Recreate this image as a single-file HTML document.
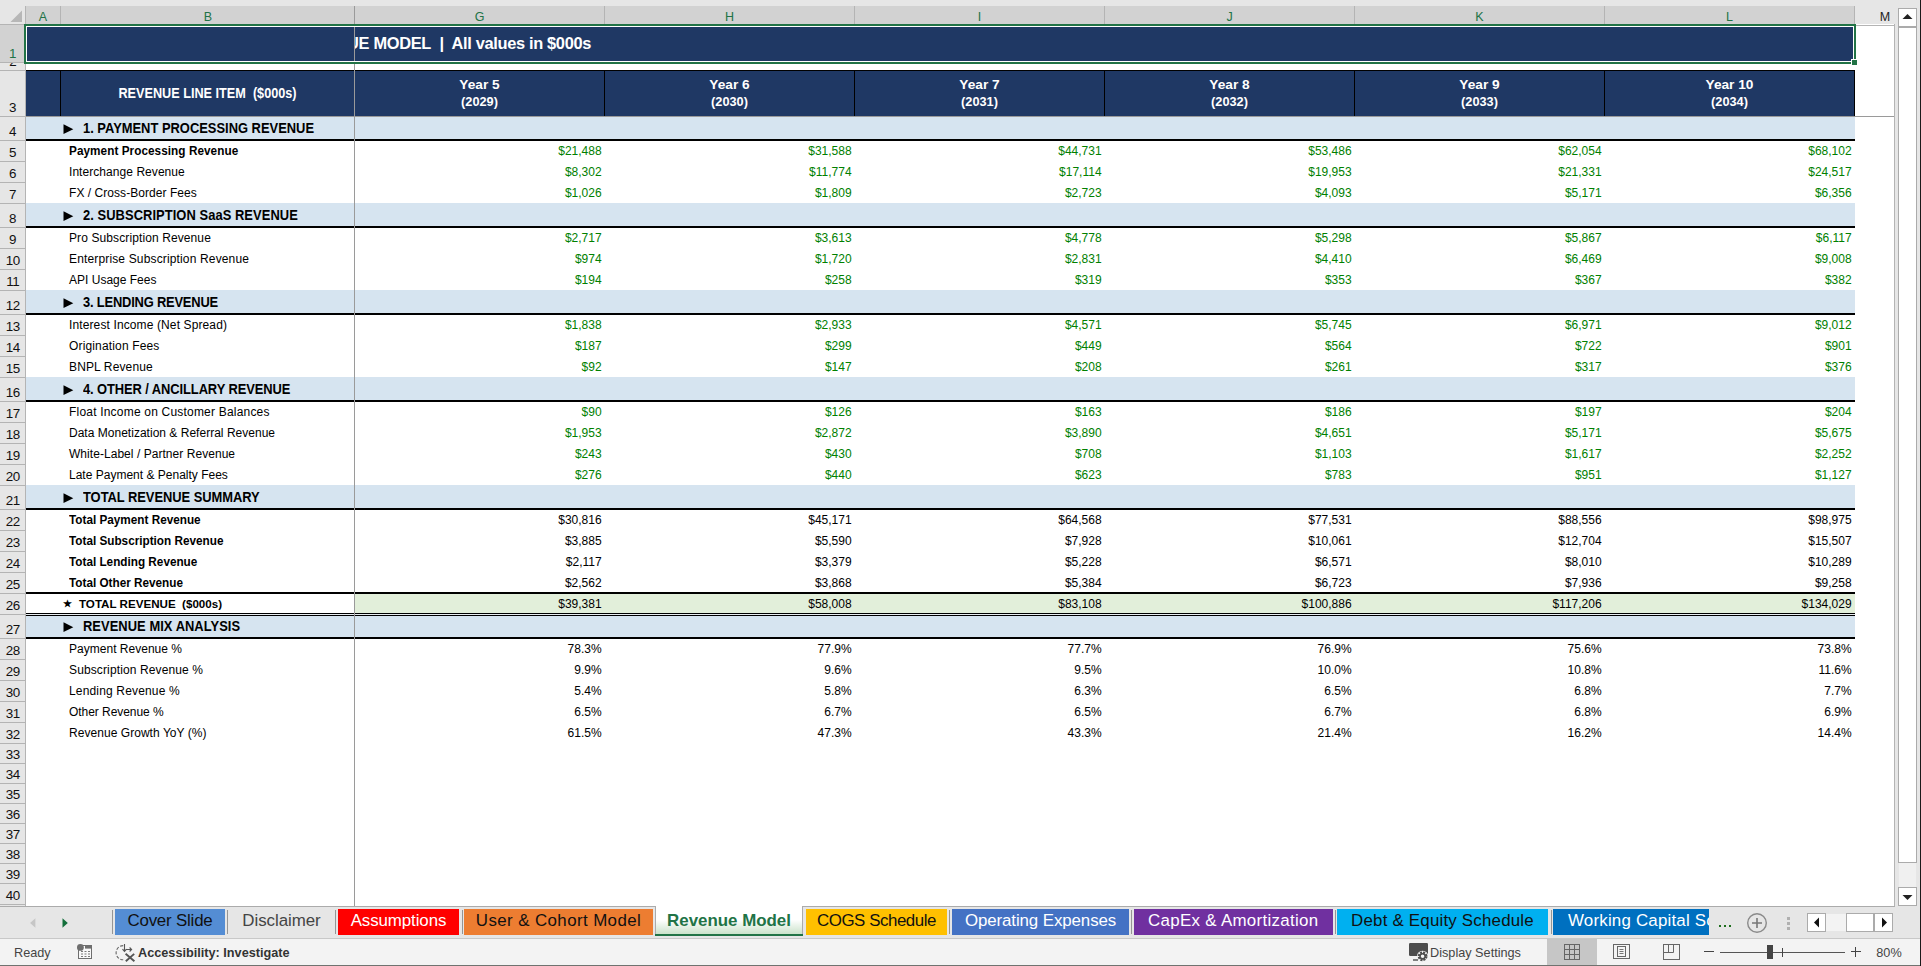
<!DOCTYPE html>
<html><head><meta charset="utf-8"><title>Revenue Model</title><style>
html,body{margin:0;padding:0;background:#e6e6e6;}
body{width:1921px;height:966px;position:relative;overflow:hidden;font-family:"Liberation Sans",sans-serif;}
body div,body svg{position:absolute;}
.t{white-space:nowrap;color:#000;font-size:12px;}
.ch{font-size:12.5px;text-align:center;color:#222;}
.ch.sel{color:#217346;}
.rh{font-size:13.4px;text-align:center;color:#111;letter-spacing:-0.5px;text-indent:0.6px;}
.rh.sel{color:#217346;}
.w{color:#fff;}
.seg{font-weight:bold;font-size:12.2px;}
.sec{font-size:14.2px;transform:scaleX(0.91);transform-origin:left center;}
.rli{font-size:14.2px;transform:scaleX(0.893);transform-origin:center center;}
.yr1{font-size:13.7px;}
.yr2{font-size:13.7px;transform:scaleX(0.93);transform-origin:center center;}
.tot{font-size:11.6px;}
.lb{font-size:12px;}
.b{font-weight:bold;font-size:12.3px;transform:scaleX(0.955);transform-origin:left center;}
.num{text-align:right;font-size:12px;}
.g{color:#008000;}
.k{color:#000;}
.title{font-weight:bold;font-size:16.4px;color:#fff;letter-spacing:-0.33px;}
.tab{font-size:16.9px;}
.st{font-size:12.7px;color:#444;}
</style></head><body>
<div style="left:0px;top:0px;width:1921px;height:966px;background:#e6e6e6;"></div>
<div style="left:26px;top:24px;width:1869px;height:882px;background:#fff;"></div>
<div style="left:26px;top:6px;width:1829px;height:18px;background:#d2d2d2;"></div>
<div style="left:60px;top:6px;width:1px;height:18px;background:#b4b4b4;"></div>
<div style="left:354px;top:6px;width:1px;height:18px;background:#9a9a9a;"></div>
<div style="left:604px;top:6px;width:1px;height:18px;background:#b4b4b4;"></div>
<div style="left:854px;top:6px;width:1px;height:18px;background:#b4b4b4;"></div>
<div style="left:1104px;top:6px;width:1px;height:18px;background:#b4b4b4;"></div>
<div style="left:1354px;top:6px;width:1px;height:18px;background:#b4b4b4;"></div>
<div style="left:1604px;top:6px;width:1px;height:18px;background:#b4b4b4;"></div>
<div style="left:1854px;top:6px;width:1px;height:18px;background:#b4b4b4;"></div>
<div class="t ch sel" style="left:23px;top:9px;width:40px;height:17px;line-height:17px;">A</div>
<div class="t ch sel" style="left:188px;top:9px;width:40px;height:17px;line-height:17px;">B</div>
<div class="t ch sel" style="left:459.5px;top:9px;width:40px;height:17px;line-height:17px;">G</div>
<div class="t ch sel" style="left:709.5px;top:9px;width:40px;height:17px;line-height:17px;">H</div>
<div class="t ch sel" style="left:959.5px;top:9px;width:40px;height:17px;line-height:17px;">I</div>
<div class="t ch sel" style="left:1209.5px;top:9px;width:40px;height:17px;line-height:17px;">J</div>
<div class="t ch sel" style="left:1459.5px;top:9px;width:40px;height:17px;line-height:17px;">K</div>
<div class="t ch sel" style="left:1709.5px;top:9px;width:40px;height:17px;line-height:17px;">L</div>
<div class="t ch" style="left:1865px;top:9px;width:40px;height:17px;line-height:17px;">M</div>
<svg style="left:10px;top:9.5px" width="13" height="13" viewBox="0 0 13 13"><path d="M12 0.5 L12 12 L0.5 12 Z" fill="#b7b7b7"/></svg>
<div style="left:0px;top:25px;width:25px;height:38px;background:#d2d2d2;"></div>
<div style="left:0px;top:24px;width:25px;height:1px;background:#b4b4b4;"></div>
<div style="left:25px;top:6px;width:1px;height:18px;background:#b4b4b4;"></div>
<div style="left:25px;top:24px;width:1px;height:882px;background:#b4b4b4;"></div>
<div style="left:0px;top:62px;width:25px;height:1px;background:#b4b4b4;"></div>
<div style="left:0px;top:70px;width:25px;height:1px;background:#b4b4b4;"></div>
<div style="left:0px;top:116px;width:25px;height:1px;background:#b4b4b4;"></div>
<div style="left:0px;top:140px;width:25px;height:1px;background:#b4b4b4;"></div>
<div style="left:0px;top:161px;width:25px;height:1px;background:#b4b4b4;"></div>
<div style="left:0px;top:182px;width:25px;height:1px;background:#b4b4b4;"></div>
<div style="left:0px;top:203px;width:25px;height:1px;background:#b4b4b4;"></div>
<div style="left:0px;top:227px;width:25px;height:1px;background:#b4b4b4;"></div>
<div style="left:0px;top:248px;width:25px;height:1px;background:#b4b4b4;"></div>
<div style="left:0px;top:269px;width:25px;height:1px;background:#b4b4b4;"></div>
<div style="left:0px;top:290px;width:25px;height:1px;background:#b4b4b4;"></div>
<div style="left:0px;top:314px;width:25px;height:1px;background:#b4b4b4;"></div>
<div style="left:0px;top:335px;width:25px;height:1px;background:#b4b4b4;"></div>
<div style="left:0px;top:356px;width:25px;height:1px;background:#b4b4b4;"></div>
<div style="left:0px;top:377px;width:25px;height:1px;background:#b4b4b4;"></div>
<div style="left:0px;top:401px;width:25px;height:1px;background:#b4b4b4;"></div>
<div style="left:0px;top:422px;width:25px;height:1px;background:#b4b4b4;"></div>
<div style="left:0px;top:443px;width:25px;height:1px;background:#b4b4b4;"></div>
<div style="left:0px;top:464px;width:25px;height:1px;background:#b4b4b4;"></div>
<div style="left:0px;top:485px;width:25px;height:1px;background:#b4b4b4;"></div>
<div style="left:0px;top:509px;width:25px;height:1px;background:#b4b4b4;"></div>
<div style="left:0px;top:530px;width:25px;height:1px;background:#b4b4b4;"></div>
<div style="left:0px;top:551px;width:25px;height:1px;background:#b4b4b4;"></div>
<div style="left:0px;top:572px;width:25px;height:1px;background:#b4b4b4;"></div>
<div style="left:0px;top:593px;width:25px;height:1px;background:#b4b4b4;"></div>
<div style="left:0px;top:614px;width:25px;height:1px;background:#b4b4b4;"></div>
<div style="left:0px;top:638px;width:25px;height:1px;background:#b4b4b4;"></div>
<div style="left:0px;top:659px;width:25px;height:1px;background:#b4b4b4;"></div>
<div style="left:0px;top:680px;width:25px;height:1px;background:#b4b4b4;"></div>
<div style="left:0px;top:701px;width:25px;height:1px;background:#b4b4b4;"></div>
<div style="left:0px;top:722px;width:25px;height:1px;background:#b4b4b4;"></div>
<div style="left:0px;top:743px;width:25px;height:1px;background:#b4b4b4;"></div>
<div style="left:0px;top:763px;width:25px;height:1px;background:#b4b4b4;"></div>
<div style="left:0px;top:783px;width:25px;height:1px;background:#b4b4b4;"></div>
<div style="left:0px;top:803px;width:25px;height:1px;background:#b4b4b4;"></div>
<div style="left:0px;top:823px;width:25px;height:1px;background:#b4b4b4;"></div>
<div style="left:0px;top:843px;width:25px;height:1px;background:#b4b4b4;"></div>
<div style="left:0px;top:863px;width:25px;height:1px;background:#b4b4b4;"></div>
<div style="left:0px;top:883px;width:25px;height:1px;background:#b4b4b4;"></div>
<div style="left:0px;top:904px;width:25px;height:1px;background:#b4b4b4;"></div>
<div class="t rh sel" style="left:0px;top:46px;width:25px;height:16px;line-height:16px;text-indent:0px;">1</div>
<div class="t rh" style="left:0;top:63px;width:25px;height:6px;overflow:hidden;"><div class="t rh" style="left:0;top:-9px;width:25px;height:16px;line-height:16px">2</div></div>
<div class="t rh" style="left:0px;top:100px;width:25px;height:16px;line-height:16px;text-indent:0px;">3</div>
<div class="t rh" style="left:0px;top:124px;width:25px;height:16px;line-height:16px;text-indent:0px;">4</div>
<div class="t rh" style="left:0px;top:145px;width:25px;height:16px;line-height:16px;text-indent:0px;">5</div>
<div class="t rh" style="left:0px;top:166px;width:25px;height:16px;line-height:16px;text-indent:0px;">6</div>
<div class="t rh" style="left:0px;top:187px;width:25px;height:16px;line-height:16px;text-indent:0px;">7</div>
<div class="t rh" style="left:0px;top:211px;width:25px;height:16px;line-height:16px;text-indent:0px;">8</div>
<div class="t rh" style="left:0px;top:232px;width:25px;height:16px;line-height:16px;text-indent:0px;">9</div>
<div class="t rh" style="left:0px;top:253px;width:25px;height:16px;line-height:16px;">10</div>
<div class="t rh" style="left:0px;top:274px;width:25px;height:16px;line-height:16px;">11</div>
<div class="t rh" style="left:0px;top:298px;width:25px;height:16px;line-height:16px;">12</div>
<div class="t rh" style="left:0px;top:319px;width:25px;height:16px;line-height:16px;">13</div>
<div class="t rh" style="left:0px;top:340px;width:25px;height:16px;line-height:16px;">14</div>
<div class="t rh" style="left:0px;top:361px;width:25px;height:16px;line-height:16px;">15</div>
<div class="t rh" style="left:0px;top:385px;width:25px;height:16px;line-height:16px;">16</div>
<div class="t rh" style="left:0px;top:406px;width:25px;height:16px;line-height:16px;">17</div>
<div class="t rh" style="left:0px;top:427px;width:25px;height:16px;line-height:16px;">18</div>
<div class="t rh" style="left:0px;top:448px;width:25px;height:16px;line-height:16px;">19</div>
<div class="t rh" style="left:0px;top:469px;width:25px;height:16px;line-height:16px;">20</div>
<div class="t rh" style="left:0px;top:493px;width:25px;height:16px;line-height:16px;">21</div>
<div class="t rh" style="left:0px;top:514px;width:25px;height:16px;line-height:16px;">22</div>
<div class="t rh" style="left:0px;top:535px;width:25px;height:16px;line-height:16px;">23</div>
<div class="t rh" style="left:0px;top:556px;width:25px;height:16px;line-height:16px;">24</div>
<div class="t rh" style="left:0px;top:577px;width:25px;height:16px;line-height:16px;">25</div>
<div class="t rh" style="left:0px;top:598px;width:25px;height:16px;line-height:16px;">26</div>
<div class="t rh" style="left:0px;top:622px;width:25px;height:16px;line-height:16px;">27</div>
<div class="t rh" style="left:0px;top:643px;width:25px;height:16px;line-height:16px;">28</div>
<div class="t rh" style="left:0px;top:664px;width:25px;height:16px;line-height:16px;">29</div>
<div class="t rh" style="left:0px;top:685px;width:25px;height:16px;line-height:16px;">30</div>
<div class="t rh" style="left:0px;top:706px;width:25px;height:16px;line-height:16px;">31</div>
<div class="t rh" style="left:0px;top:727px;width:25px;height:16px;line-height:16px;">32</div>
<div class="t rh" style="left:0px;top:747px;width:25px;height:16px;line-height:16px;">33</div>
<div class="t rh" style="left:0px;top:767px;width:25px;height:16px;line-height:16px;">34</div>
<div class="t rh" style="left:0px;top:787px;width:25px;height:16px;line-height:16px;">35</div>
<div class="t rh" style="left:0px;top:807px;width:25px;height:16px;line-height:16px;">36</div>
<div class="t rh" style="left:0px;top:827px;width:25px;height:16px;line-height:16px;">37</div>
<div class="t rh" style="left:0px;top:847px;width:25px;height:16px;line-height:16px;">38</div>
<div class="t rh" style="left:0px;top:867px;width:25px;height:16px;line-height:16px;">39</div>
<div class="t rh" style="left:0px;top:888px;width:25px;height:16px;line-height:16px;">40</div>
<div style="left:27px;top:27px;width:1826px;height:34px;background:#1f3864;"></div>
<div style="left:26px;top:70px;width:1829px;height:46px;background:#1f3864;"></div>
<div style="left:26px;top:70px;width:1829px;height:1px;background:#000;"></div>
<div style="left:60px;top:70px;width:1px;height:46px;background:#000;"></div>
<div style="left:354px;top:70px;width:1px;height:46px;background:#000;"></div>
<div style="left:604px;top:70px;width:1px;height:46px;background:#000;"></div>
<div style="left:854px;top:70px;width:1px;height:46px;background:#000;"></div>
<div style="left:1104px;top:70px;width:1px;height:46px;background:#000;"></div>
<div style="left:1354px;top:70px;width:1px;height:46px;background:#000;"></div>
<div style="left:1604px;top:70px;width:1px;height:46px;background:#000;"></div>
<div style="left:1854px;top:70px;width:1px;height:46px;background:#000;"></div>
<div class="t seg w rli" style="left:61px;top:70px;width:293px;height:46px;line-height:46px;text-align:center;">REVENUE LINE ITEM&nbsp; ($000s)</div>
<div class="t seg w yr1" style="left:355px;top:76px;width:249px;height:18px;line-height:18px;text-align:center;">Year 5</div>
<div class="t seg w yr2" style="left:355px;top:93px;width:249px;height:18px;line-height:18px;text-align:center;">(2029)</div>
<div class="t seg w yr1" style="left:605px;top:76px;width:249px;height:18px;line-height:18px;text-align:center;">Year 6</div>
<div class="t seg w yr2" style="left:605px;top:93px;width:249px;height:18px;line-height:18px;text-align:center;">(2030)</div>
<div class="t seg w yr1" style="left:855px;top:76px;width:249px;height:18px;line-height:18px;text-align:center;">Year 7</div>
<div class="t seg w yr2" style="left:855px;top:93px;width:249px;height:18px;line-height:18px;text-align:center;">(2031)</div>
<div class="t seg w yr1" style="left:1105px;top:76px;width:249px;height:18px;line-height:18px;text-align:center;">Year 8</div>
<div class="t seg w yr2" style="left:1105px;top:93px;width:249px;height:18px;line-height:18px;text-align:center;">(2032)</div>
<div class="t seg w yr1" style="left:1355px;top:76px;width:249px;height:18px;line-height:18px;text-align:center;">Year 9</div>
<div class="t seg w yr2" style="left:1355px;top:93px;width:249px;height:18px;line-height:18px;text-align:center;">(2033)</div>
<div class="t seg w yr1" style="left:1605px;top:76px;width:249px;height:18px;line-height:18px;text-align:center;">Year 10</div>
<div class="t seg w yr2" style="left:1605px;top:93px;width:249px;height:18px;line-height:18px;text-align:center;">(2034)</div>
<div style="left:26px;top:116px;width:1829px;height:23px;background:#d6e4f0;"></div>
<div style="left:26px;top:139px;width:1829px;height:2px;background:#000;"></div>
<svg style="left:63px;top:124px" width="11" height="11" viewBox="0 0 11 11"><path d="M0.5 0.3 L10.3 5.2 L0.5 10 Z" fill="#000"/></svg>
<div class="t seg sec" style="left:83px;top:117px;width:270px;height:23px;line-height:23px;letter-spacing:0.0px;">1. PAYMENT PROCESSING REVENUE</div>
<div style="left:26px;top:203px;width:1829px;height:23px;background:#d6e4f0;"></div>
<div style="left:26px;top:226px;width:1829px;height:2px;background:#000;"></div>
<svg style="left:63px;top:211px" width="11" height="11" viewBox="0 0 11 11"><path d="M0.5 0.3 L10.3 5.2 L0.5 10 Z" fill="#000"/></svg>
<div class="t seg sec" style="left:83px;top:204px;width:270px;height:23px;line-height:23px;letter-spacing:0.069px;">2. SUBSCRIPTION SaaS REVENUE</div>
<div style="left:26px;top:290px;width:1829px;height:23px;background:#d6e4f0;"></div>
<div style="left:26px;top:313px;width:1829px;height:2px;background:#000;"></div>
<svg style="left:63px;top:298px" width="11" height="11" viewBox="0 0 11 11"><path d="M0.5 0.3 L10.3 5.2 L0.5 10 Z" fill="#000"/></svg>
<div class="t seg sec" style="left:83px;top:291px;width:270px;height:23px;line-height:23px;letter-spacing:-0.213px;">3. LENDING REVENUE</div>
<div style="left:26px;top:377px;width:1829px;height:23px;background:#d6e4f0;"></div>
<div style="left:26px;top:400px;width:1829px;height:2px;background:#000;"></div>
<svg style="left:63px;top:385px" width="11" height="11" viewBox="0 0 11 11"><path d="M0.5 0.3 L10.3 5.2 L0.5 10 Z" fill="#000"/></svg>
<div class="t seg sec" style="left:83px;top:378px;width:270px;height:23px;line-height:23px;letter-spacing:-0.098px;">4. OTHER / ANCILLARY REVENUE</div>
<div style="left:26px;top:485px;width:1829px;height:23px;background:#d6e4f0;"></div>
<div style="left:26px;top:508px;width:1829px;height:2px;background:#000;"></div>
<svg style="left:63px;top:493px" width="11" height="11" viewBox="0 0 11 11"><path d="M0.5 0.3 L10.3 5.2 L0.5 10 Z" fill="#000"/></svg>
<div class="t seg sec" style="left:83px;top:486px;width:270px;height:23px;line-height:23px;letter-spacing:-0.038px;">TOTAL REVENUE SUMMARY</div>
<div style="left:26px;top:616px;width:1829px;height:21px;background:#d6e4f0;"></div>
<div style="left:26px;top:637px;width:1829px;height:2px;background:#000;"></div>
<svg style="left:63px;top:622px" width="11" height="11" viewBox="0 0 11 11"><path d="M0.5 0.3 L10.3 5.2 L0.5 10 Z" fill="#000"/></svg>
<div class="t seg sec" style="left:83px;top:615px;width:270px;height:23px;line-height:23px;letter-spacing:0.052px;">REVENUE MIX ANALYSIS</div>
<div class="t lb b" style="left:69px;top:141px;width:284px;height:21px;line-height:21px;letter-spacing:0.06px;">Payment Processing Revenue</div>
<div class="t num g" style="left:355px;top:141px;width:246.6px;height:21px;line-height:21px;">$21,488</div>
<div class="t num g" style="left:605px;top:141px;width:246.6px;height:21px;line-height:21px;">$31,588</div>
<div class="t num g" style="left:855px;top:141px;width:246.6px;height:21px;line-height:21px;">$44,731</div>
<div class="t num g" style="left:1105px;top:141px;width:246.6px;height:21px;line-height:21px;">$53,486</div>
<div class="t num g" style="left:1355px;top:141px;width:246.6px;height:21px;line-height:21px;">$62,054</div>
<div class="t num g" style="left:1605px;top:141px;width:246.6px;height:21px;line-height:21px;">$68,102</div>
<div class="t lb" style="left:69px;top:162px;width:284px;height:21px;line-height:21px;letter-spacing:0.056px;">Interchange Revenue</div>
<div class="t num g" style="left:355px;top:162px;width:246.6px;height:21px;line-height:21px;">$8,302</div>
<div class="t num g" style="left:605px;top:162px;width:246.6px;height:21px;line-height:21px;">$11,774</div>
<div class="t num g" style="left:855px;top:162px;width:246.6px;height:21px;line-height:21px;">$17,114</div>
<div class="t num g" style="left:1105px;top:162px;width:246.6px;height:21px;line-height:21px;">$19,953</div>
<div class="t num g" style="left:1355px;top:162px;width:246.6px;height:21px;line-height:21px;">$21,331</div>
<div class="t num g" style="left:1605px;top:162px;width:246.6px;height:21px;line-height:21px;">$24,517</div>
<div class="t lb" style="left:69px;top:183px;width:284px;height:21px;line-height:21px;letter-spacing:0.048px;">FX / Cross-Border Fees</div>
<div class="t num g" style="left:355px;top:183px;width:246.6px;height:21px;line-height:21px;">$1,026</div>
<div class="t num g" style="left:605px;top:183px;width:246.6px;height:21px;line-height:21px;">$1,809</div>
<div class="t num g" style="left:855px;top:183px;width:246.6px;height:21px;line-height:21px;">$2,723</div>
<div class="t num g" style="left:1105px;top:183px;width:246.6px;height:21px;line-height:21px;">$4,093</div>
<div class="t num g" style="left:1355px;top:183px;width:246.6px;height:21px;line-height:21px;">$5,171</div>
<div class="t num g" style="left:1605px;top:183px;width:246.6px;height:21px;line-height:21px;">$6,356</div>
<div class="t lb" style="left:69px;top:228px;width:284px;height:21px;line-height:21px;letter-spacing:0.104px;">Pro Subscription Revenue</div>
<div class="t num g" style="left:355px;top:228px;width:246.6px;height:21px;line-height:21px;">$2,717</div>
<div class="t num g" style="left:605px;top:228px;width:246.6px;height:21px;line-height:21px;">$3,613</div>
<div class="t num g" style="left:855px;top:228px;width:246.6px;height:21px;line-height:21px;">$4,778</div>
<div class="t num g" style="left:1105px;top:228px;width:246.6px;height:21px;line-height:21px;">$5,298</div>
<div class="t num g" style="left:1355px;top:228px;width:246.6px;height:21px;line-height:21px;">$5,867</div>
<div class="t num g" style="left:1605px;top:228px;width:246.6px;height:21px;line-height:21px;">$6,117</div>
<div class="t lb" style="left:69px;top:249px;width:284px;height:21px;line-height:21px;letter-spacing:0.15px;">Enterprise Subscription Revenue</div>
<div class="t num g" style="left:355px;top:249px;width:246.6px;height:21px;line-height:21px;">$974</div>
<div class="t num g" style="left:605px;top:249px;width:246.6px;height:21px;line-height:21px;">$1,720</div>
<div class="t num g" style="left:855px;top:249px;width:246.6px;height:21px;line-height:21px;">$2,831</div>
<div class="t num g" style="left:1105px;top:249px;width:246.6px;height:21px;line-height:21px;">$4,410</div>
<div class="t num g" style="left:1355px;top:249px;width:246.6px;height:21px;line-height:21px;">$6,469</div>
<div class="t num g" style="left:1605px;top:249px;width:246.6px;height:21px;line-height:21px;">$9,008</div>
<div class="t lb" style="left:69px;top:270px;width:284px;height:21px;line-height:21px;letter-spacing:0.008px;">API Usage Fees</div>
<div class="t num g" style="left:355px;top:270px;width:246.6px;height:21px;line-height:21px;">$194</div>
<div class="t num g" style="left:605px;top:270px;width:246.6px;height:21px;line-height:21px;">$258</div>
<div class="t num g" style="left:855px;top:270px;width:246.6px;height:21px;line-height:21px;">$319</div>
<div class="t num g" style="left:1105px;top:270px;width:246.6px;height:21px;line-height:21px;">$353</div>
<div class="t num g" style="left:1355px;top:270px;width:246.6px;height:21px;line-height:21px;">$367</div>
<div class="t num g" style="left:1605px;top:270px;width:246.6px;height:21px;line-height:21px;">$382</div>
<div class="t lb" style="left:69px;top:315px;width:284px;height:21px;line-height:21px;letter-spacing:0.119px;">Interest Income (Net Spread)</div>
<div class="t num g" style="left:355px;top:315px;width:246.6px;height:21px;line-height:21px;">$1,838</div>
<div class="t num g" style="left:605px;top:315px;width:246.6px;height:21px;line-height:21px;">$2,933</div>
<div class="t num g" style="left:855px;top:315px;width:246.6px;height:21px;line-height:21px;">$4,571</div>
<div class="t num g" style="left:1105px;top:315px;width:246.6px;height:21px;line-height:21px;">$5,745</div>
<div class="t num g" style="left:1355px;top:315px;width:246.6px;height:21px;line-height:21px;">$6,971</div>
<div class="t num g" style="left:1605px;top:315px;width:246.6px;height:21px;line-height:21px;">$9,012</div>
<div class="t lb" style="left:69px;top:336px;width:284px;height:21px;line-height:21px;letter-spacing:0.153px;">Origination Fees</div>
<div class="t num g" style="left:355px;top:336px;width:246.6px;height:21px;line-height:21px;">$187</div>
<div class="t num g" style="left:605px;top:336px;width:246.6px;height:21px;line-height:21px;">$299</div>
<div class="t num g" style="left:855px;top:336px;width:246.6px;height:21px;line-height:21px;">$449</div>
<div class="t num g" style="left:1105px;top:336px;width:246.6px;height:21px;line-height:21px;">$564</div>
<div class="t num g" style="left:1355px;top:336px;width:246.6px;height:21px;line-height:21px;">$722</div>
<div class="t num g" style="left:1605px;top:336px;width:246.6px;height:21px;line-height:21px;">$901</div>
<div class="t lb" style="left:69px;top:357px;width:284px;height:21px;line-height:21px;letter-spacing:0.127px;">BNPL Revenue</div>
<div class="t num g" style="left:355px;top:357px;width:246.6px;height:21px;line-height:21px;">$92</div>
<div class="t num g" style="left:605px;top:357px;width:246.6px;height:21px;line-height:21px;">$147</div>
<div class="t num g" style="left:855px;top:357px;width:246.6px;height:21px;line-height:21px;">$208</div>
<div class="t num g" style="left:1105px;top:357px;width:246.6px;height:21px;line-height:21px;">$261</div>
<div class="t num g" style="left:1355px;top:357px;width:246.6px;height:21px;line-height:21px;">$317</div>
<div class="t num g" style="left:1605px;top:357px;width:246.6px;height:21px;line-height:21px;">$376</div>
<div class="t lb" style="left:69px;top:402px;width:284px;height:21px;line-height:21px;letter-spacing:0.2px;">Float Income on Customer Balances</div>
<div class="t num g" style="left:355px;top:402px;width:246.6px;height:21px;line-height:21px;">$90</div>
<div class="t num g" style="left:605px;top:402px;width:246.6px;height:21px;line-height:21px;">$126</div>
<div class="t num g" style="left:855px;top:402px;width:246.6px;height:21px;line-height:21px;">$163</div>
<div class="t num g" style="left:1105px;top:402px;width:246.6px;height:21px;line-height:21px;">$186</div>
<div class="t num g" style="left:1355px;top:402px;width:246.6px;height:21px;line-height:21px;">$197</div>
<div class="t num g" style="left:1605px;top:402px;width:246.6px;height:21px;line-height:21px;">$204</div>
<div class="t lb" style="left:69px;top:423px;width:284px;height:21px;line-height:21px;letter-spacing:0.017px;">Data Monetization &amp; Referral Revenue</div>
<div class="t num g" style="left:355px;top:423px;width:246.6px;height:21px;line-height:21px;">$1,953</div>
<div class="t num g" style="left:605px;top:423px;width:246.6px;height:21px;line-height:21px;">$2,872</div>
<div class="t num g" style="left:855px;top:423px;width:246.6px;height:21px;line-height:21px;">$3,890</div>
<div class="t num g" style="left:1105px;top:423px;width:246.6px;height:21px;line-height:21px;">$4,651</div>
<div class="t num g" style="left:1355px;top:423px;width:246.6px;height:21px;line-height:21px;">$5,171</div>
<div class="t num g" style="left:1605px;top:423px;width:246.6px;height:21px;line-height:21px;">$5,675</div>
<div class="t lb" style="left:69px;top:444px;width:284px;height:21px;line-height:21px;letter-spacing:0.046px;">White-Label / Partner Revenue</div>
<div class="t num g" style="left:355px;top:444px;width:246.6px;height:21px;line-height:21px;">$243</div>
<div class="t num g" style="left:605px;top:444px;width:246.6px;height:21px;line-height:21px;">$430</div>
<div class="t num g" style="left:855px;top:444px;width:246.6px;height:21px;line-height:21px;">$708</div>
<div class="t num g" style="left:1105px;top:444px;width:246.6px;height:21px;line-height:21px;">$1,103</div>
<div class="t num g" style="left:1355px;top:444px;width:246.6px;height:21px;line-height:21px;">$1,617</div>
<div class="t num g" style="left:1605px;top:444px;width:246.6px;height:21px;line-height:21px;">$2,252</div>
<div class="t lb" style="left:69px;top:465px;width:284px;height:21px;line-height:21px;letter-spacing:0.004px;">Late Payment &amp; Penalty Fees</div>
<div class="t num g" style="left:355px;top:465px;width:246.6px;height:21px;line-height:21px;">$276</div>
<div class="t num g" style="left:605px;top:465px;width:246.6px;height:21px;line-height:21px;">$440</div>
<div class="t num g" style="left:855px;top:465px;width:246.6px;height:21px;line-height:21px;">$623</div>
<div class="t num g" style="left:1105px;top:465px;width:246.6px;height:21px;line-height:21px;">$783</div>
<div class="t num g" style="left:1355px;top:465px;width:246.6px;height:21px;line-height:21px;">$951</div>
<div class="t num g" style="left:1605px;top:465px;width:246.6px;height:21px;line-height:21px;">$1,127</div>
<div class="t lb b" style="left:69px;top:510px;width:284px;height:21px;line-height:21px;">Total Payment Revenue</div>
<div class="t num k" style="left:355px;top:510px;width:246.6px;height:21px;line-height:21px;">$30,816</div>
<div class="t num k" style="left:605px;top:510px;width:246.6px;height:21px;line-height:21px;">$45,171</div>
<div class="t num k" style="left:855px;top:510px;width:246.6px;height:21px;line-height:21px;">$64,568</div>
<div class="t num k" style="left:1105px;top:510px;width:246.6px;height:21px;line-height:21px;">$77,531</div>
<div class="t num k" style="left:1355px;top:510px;width:246.6px;height:21px;line-height:21px;">$88,556</div>
<div class="t num k" style="left:1605px;top:510px;width:246.6px;height:21px;line-height:21px;">$98,975</div>
<div class="t lb b" style="left:69px;top:531px;width:284px;height:21px;line-height:21px;">Total Subscription Revenue</div>
<div class="t num k" style="left:355px;top:531px;width:246.6px;height:21px;line-height:21px;">$3,885</div>
<div class="t num k" style="left:605px;top:531px;width:246.6px;height:21px;line-height:21px;">$5,590</div>
<div class="t num k" style="left:855px;top:531px;width:246.6px;height:21px;line-height:21px;">$7,928</div>
<div class="t num k" style="left:1105px;top:531px;width:246.6px;height:21px;line-height:21px;">$10,061</div>
<div class="t num k" style="left:1355px;top:531px;width:246.6px;height:21px;line-height:21px;">$12,704</div>
<div class="t num k" style="left:1605px;top:531px;width:246.6px;height:21px;line-height:21px;">$15,507</div>
<div class="t lb b" style="left:69px;top:552px;width:284px;height:21px;line-height:21px;">Total Lending Revenue</div>
<div class="t num k" style="left:355px;top:552px;width:246.6px;height:21px;line-height:21px;">$2,117</div>
<div class="t num k" style="left:605px;top:552px;width:246.6px;height:21px;line-height:21px;">$3,379</div>
<div class="t num k" style="left:855px;top:552px;width:246.6px;height:21px;line-height:21px;">$5,228</div>
<div class="t num k" style="left:1105px;top:552px;width:246.6px;height:21px;line-height:21px;">$6,571</div>
<div class="t num k" style="left:1355px;top:552px;width:246.6px;height:21px;line-height:21px;">$8,010</div>
<div class="t num k" style="left:1605px;top:552px;width:246.6px;height:21px;line-height:21px;">$10,289</div>
<div class="t lb b" style="left:69px;top:573px;width:284px;height:21px;line-height:21px;">Total Other Revenue</div>
<div class="t num k" style="left:355px;top:573px;width:246.6px;height:21px;line-height:21px;">$2,562</div>
<div class="t num k" style="left:605px;top:573px;width:246.6px;height:21px;line-height:21px;">$3,868</div>
<div class="t num k" style="left:855px;top:573px;width:246.6px;height:21px;line-height:21px;">$5,384</div>
<div class="t num k" style="left:1105px;top:573px;width:246.6px;height:21px;line-height:21px;">$6,723</div>
<div class="t num k" style="left:1355px;top:573px;width:246.6px;height:21px;line-height:21px;">$7,936</div>
<div class="t num k" style="left:1605px;top:573px;width:246.6px;height:21px;line-height:21px;">$9,258</div>
<div style="left:355px;top:594px;width:1500px;height:19px;background:#e2efda;"></div>
<div style="left:26px;top:592px;width:1829px;height:2px;background:#000;"></div>
<div style="left:26px;top:613px;width:1829px;height:1px;background:#000;"></div>
<div style="left:26px;top:615px;width:1829px;height:1px;background:#000;"></div>
<div style="left:26px;top:614px;width:1829px;height:1px;background:#e9eef2;"></div>
<div class="t seg" style="left:63px;top:593px;width:12px;height:21px;line-height:21px;font-size:9.5px">&#9733;</div>
<div class="t seg tot" style="left:79px;top:593px;width:275px;height:21px;line-height:21px;">TOTAL REVENUE&nbsp; ($000s)</div>
<div class="t num k" style="left:355px;top:594px;width:246.6px;height:21px;line-height:21px;">$39,381</div>
<div class="t num k" style="left:605px;top:594px;width:246.6px;height:21px;line-height:21px;">$58,008</div>
<div class="t num k" style="left:855px;top:594px;width:246.6px;height:21px;line-height:21px;">$83,108</div>
<div class="t num k" style="left:1105px;top:594px;width:246.6px;height:21px;line-height:21px;">$100,886</div>
<div class="t num k" style="left:1355px;top:594px;width:246.6px;height:21px;line-height:21px;">$117,206</div>
<div class="t num k" style="left:1605px;top:594px;width:246.6px;height:21px;line-height:21px;">$134,029</div>
<div class="t lb" style="left:69px;top:639px;width:284px;height:21px;line-height:21px;letter-spacing:0.019px;">Payment Revenue %</div>
<div class="t num k" style="left:355px;top:639px;width:246.6px;height:21px;line-height:21px;">78.3%</div>
<div class="t num k" style="left:605px;top:639px;width:246.6px;height:21px;line-height:21px;">77.9%</div>
<div class="t num k" style="left:855px;top:639px;width:246.6px;height:21px;line-height:21px;">77.7%</div>
<div class="t num k" style="left:1105px;top:639px;width:246.6px;height:21px;line-height:21px;">76.9%</div>
<div class="t num k" style="left:1355px;top:639px;width:246.6px;height:21px;line-height:21px;">75.6%</div>
<div class="t num k" style="left:1605px;top:639px;width:246.6px;height:21px;line-height:21px;">73.8%</div>
<div class="t lb" style="left:69px;top:660px;width:284px;height:21px;line-height:21px;letter-spacing:0.124px;">Subscription Revenue %</div>
<div class="t num k" style="left:355px;top:660px;width:246.6px;height:21px;line-height:21px;">9.9%</div>
<div class="t num k" style="left:605px;top:660px;width:246.6px;height:21px;line-height:21px;">9.6%</div>
<div class="t num k" style="left:855px;top:660px;width:246.6px;height:21px;line-height:21px;">9.5%</div>
<div class="t num k" style="left:1105px;top:660px;width:246.6px;height:21px;line-height:21px;">10.0%</div>
<div class="t num k" style="left:1355px;top:660px;width:246.6px;height:21px;line-height:21px;">10.8%</div>
<div class="t num k" style="left:1605px;top:660px;width:246.6px;height:21px;line-height:21px;">11.6%</div>
<div class="t lb" style="left:69px;top:681px;width:284px;height:21px;line-height:21px;letter-spacing:0.162px;">Lending Revenue %</div>
<div class="t num k" style="left:355px;top:681px;width:246.6px;height:21px;line-height:21px;">5.4%</div>
<div class="t num k" style="left:605px;top:681px;width:246.6px;height:21px;line-height:21px;">5.8%</div>
<div class="t num k" style="left:855px;top:681px;width:246.6px;height:21px;line-height:21px;">6.3%</div>
<div class="t num k" style="left:1105px;top:681px;width:246.6px;height:21px;line-height:21px;">6.5%</div>
<div class="t num k" style="left:1355px;top:681px;width:246.6px;height:21px;line-height:21px;">6.8%</div>
<div class="t num k" style="left:1605px;top:681px;width:246.6px;height:21px;line-height:21px;">7.7%</div>
<div class="t lb" style="left:69px;top:702px;width:284px;height:21px;line-height:21px;letter-spacing:-0.05px;">Other Revenue %</div>
<div class="t num k" style="left:355px;top:702px;width:246.6px;height:21px;line-height:21px;">6.5%</div>
<div class="t num k" style="left:605px;top:702px;width:246.6px;height:21px;line-height:21px;">6.7%</div>
<div class="t num k" style="left:855px;top:702px;width:246.6px;height:21px;line-height:21px;">6.5%</div>
<div class="t num k" style="left:1105px;top:702px;width:246.6px;height:21px;line-height:21px;">6.7%</div>
<div class="t num k" style="left:1355px;top:702px;width:246.6px;height:21px;line-height:21px;">6.8%</div>
<div class="t num k" style="left:1605px;top:702px;width:246.6px;height:21px;line-height:21px;">6.9%</div>
<div class="t lb" style="left:69px;top:723px;width:284px;height:21px;line-height:21px;letter-spacing:0.048px;">Revenue Growth YoY (%)</div>
<div class="t num k" style="left:355px;top:723px;width:246.6px;height:21px;line-height:21px;">61.5%</div>
<div class="t num k" style="left:605px;top:723px;width:246.6px;height:21px;line-height:21px;">47.3%</div>
<div class="t num k" style="left:855px;top:723px;width:246.6px;height:21px;line-height:21px;">43.3%</div>
<div class="t num k" style="left:1105px;top:723px;width:246.6px;height:21px;line-height:21px;">21.4%</div>
<div class="t num k" style="left:1355px;top:723px;width:246.6px;height:21px;line-height:21px;">16.2%</div>
<div class="t num k" style="left:1605px;top:723px;width:246.6px;height:21px;line-height:21px;">14.4%</div>
<div class="t" style="left:355px;top:27px;width:400px;height:34px;overflow:hidden"><div class="t title" style="right:164px;top:0;height:34px;line-height:33px;white-space:nowrap">NOVAPAY FINTECH &mdash; REVENUE MODEL&nbsp; |&nbsp; All values in $000s</div></div>
<div style="left:354px;top:6px;width:1px;height:900px;background:#9a9a9a;"></div>
<div style="left:26px;top:116px;width:1868px;height:1px;background:#9a9a9a;"></div>
<div style="left:24px;top:24px;width:1832px;height:2px;background:#217346;"></div>
<div style="left:24px;top:24px;width:2px;height:40px;background:#217346;"></div>
<div style="left:24px;top:62px;width:1828px;height:2px;background:#217346;"></div>
<div style="left:1854px;top:24px;width:2px;height:36px;background:#217346;"></div>
<div style="left:26px;top:26px;width:1828px;height:1px;background:#fff;"></div>
<div style="left:26px;top:26px;width:1px;height:36px;background:#fff;"></div>
<div style="left:26px;top:61px;width:1826px;height:1px;background:#fff;"></div>
<div style="left:1853px;top:26px;width:1px;height:34px;background:#fff;"></div>
<div style="left:1851px;top:59px;width:7px;height:7px;background:#fff;"></div>
<div style="left:1852px;top:60px;width:5px;height:5px;background:#217346;"></div>
<div style="left:1894px;top:24px;width:1px;height:882px;background:#b4b4b4;"></div>
<div style="left:1856px;top:25px;width:39px;height:1px;background:#b4b4b4;"></div>
<div style="left:0px;top:906px;width:1895px;height:1px;background:#ababab;"></div>
<div style="left:1898px;top:8px;width:19px;height:19px;background:#fff;border:1px solid #ababab;box-sizing:border-box;"></div>
<svg style="left:1902px;top:13px" width="11" height="7" viewBox="0 0 11 7"><path d="M0.5 6 L5.5 1 L10.5 6 Z" fill="#222"/></svg>
<div style="left:1898px;top:27px;width:19px;height:836px;background:#fff;border:1px solid #ababab;box-sizing:border-box;"></div>
<div style="left:1899px;top:863px;width:17px;height:24px;background:#f0f0f0;"></div>
<div style="left:1898px;top:887px;width:19px;height:19px;background:#fff;border:1px solid #ababab;box-sizing:border-box;"></div>
<svg style="left:1902px;top:894px" width="11" height="7" viewBox="0 0 11 7"><path d="M0.5 1 L5.5 6 L10.5 1 Z" fill="#222"/></svg>
<div style="left:1920px;top:0px;width:1px;height:966px;background:#1a1a1a;"></div>
<svg style="left:29px;top:916.5px" width="8" height="12" viewBox="0 0 8 12"><path d="M6.4 1.3 L1.1 6 L6.4 10.7 Z" fill="#c6c6c6"/></svg>
<svg style="left:60.5px;top:916.5px" width="8" height="12" viewBox="0 0 8 12"><path d="M1.5 1.3 L6.8 6 L1.5 10.7 Z" fill="#136f3b"/></svg>
<div style="left:115px;top:909px;width:110px;height:26px;background:#548dd4;"></div>
<div class="t tab" style="left:115px;top:908px;width:110px;height:26px;line-height:26px;color:#111;text-align:center;letter-spacing:-0.2px;">Cover Slide</div>
<div class="t tab" style="left:229px;top:908px;width:105px;height:26px;line-height:26px;color:#444;text-align:center;letter-spacing:-0.05px;">Disclaimer</div>
<div style="left:338px;top:909px;width:121px;height:26px;background:#ff0000;"></div>
<div class="t tab" style="left:338px;top:908px;width:121px;height:26px;line-height:26px;color:#fff;text-align:center;letter-spacing:-0.1px;">Assumptions</div>
<div style="left:464px;top:909px;width:189px;height:26px;background:#ed7d31;"></div>
<div class="t tab" style="left:464px;top:908px;width:189px;height:26px;line-height:26px;color:#111;text-align:center;letter-spacing:0.4px;">User &amp; Cohort Model</div>
<div style="left:806px;top:909px;width:141px;height:26px;background:#ffc000;"></div>
<div class="t tab" style="left:806px;top:908px;width:141px;height:26px;line-height:26px;color:#111;text-align:center;letter-spacing:-0.45px;">COGS Schedule</div>
<div style="left:952px;top:909px;width:177px;height:26px;background:#4472c4;"></div>
<div class="t tab" style="left:952px;top:908px;width:177px;height:26px;line-height:26px;color:#fff;text-align:center;letter-spacing:-0.1px;">Operating Expenses</div>
<div style="left:1134px;top:909px;width:198.5px;height:26px;background:#7030a0;"></div>
<div class="t tab" style="left:1134px;top:908px;width:198.5px;height:26px;line-height:26px;color:#fff;text-align:center;letter-spacing:0.3px;">CapEx &amp; Amortization</div>
<div style="left:1337px;top:909px;width:211px;height:26px;background:#00b0f0;"></div>
<div class="t tab" style="left:1337px;top:908px;width:211px;height:26px;line-height:26px;color:#111;text-align:center;letter-spacing:0.2px;">Debt &amp; Equity Schedule</div>
<div style="left:112px;top:910px;width:1px;height:24px;background:#959595;"></div>
<div style="left:227px;top:910px;width:1px;height:24px;background:#959595;"></div>
<div style="left:335px;top:910px;width:1px;height:24px;background:#959595;"></div>
<div style="left:462px;top:910px;width:1px;height:24px;background:#959595;"></div>
<div style="left:949px;top:910px;width:1px;height:24px;background:#959595;"></div>
<div style="left:1131px;top:910px;width:1px;height:24px;background:#959595;"></div>
<div style="left:1335px;top:910px;width:1px;height:24px;background:#959595;"></div>
<div style="left:1551px;top:910px;width:1px;height:24px;background:#959595;"></div>
<div style="left:1553px;top:909px;width:156px;height:26px;background:#0070c0;"></div>
<div class="t" style="left:1553px;top:908px;width:156px;height:26px;overflow:hidden"><div class="t tab" style="left:15px;top:0;line-height:26px;color:#fff;white-space:nowrap;letter-spacing:0.2px">Working Capital Schedule</div></div>
<div style="left:655px;top:906px;width:148px;height:30px;background:linear-gradient(#fff 0,#fff 45%,#c3dec3 100%);border-left:1px solid #ababab;border-right:1px solid #ababab;box-sizing:border-box"></div>
<div style="left:656px;top:906px;width:146px;height:1px;background:#fff;"></div>
<div style="left:655px;top:934px;width:148px;height:2px;background:#217346;"></div>
<div class="t tab" style="left:655px;top:908px;width:148px;height:26px;line-height:26px;color:#217346;font-weight:bold;text-align:center;">Revenue Model</div>
<div style="left:1719px;top:925px;width:2px;height:2px;background:#1e6e1e;"></div>
<div style="left:1724px;top:925px;width:2px;height:2px;background:#1e6e1e;"></div>
<div style="left:1729px;top:925px;width:2px;height:2px;background:#1e6e1e;"></div>
<svg style="left:1746px;top:912px" width="22" height="22" viewBox="0 0 22 22"><circle cx="11" cy="11" r="9.3" fill="none" stroke="#8a8a8a" stroke-width="1.4"/><path d="M6 11 H16 M11 6 V16" stroke="#777" stroke-width="1.6"/></svg>
<div style="left:1787px;top:917px;width:3px;height:3px;background:#b0b0b0;"></div>
<div style="left:1787px;top:922px;width:3px;height:3px;background:#b0b0b0;"></div>
<div style="left:1787px;top:927px;width:3px;height:3px;background:#b0b0b0;"></div>
<div style="left:1807px;top:913px;width:19px;height:19px;background:#fff;border:1px solid #ababab;box-sizing:border-box;"></div>
<svg style="left:1813px;top:917px" width="7" height="11" viewBox="0 0 7 11"><path d="M6 0.5 L1 5.5 L6 10.5 Z" fill="#111"/></svg>
<div style="left:1826px;top:914px;width:20px;height:17px;background:#f3f3f3;"></div>
<div style="left:1846px;top:913px;width:28px;height:19px;background:#fff;border:1px solid #ababab;box-sizing:border-box;"></div>
<div style="left:1874px;top:913px;width:19px;height:19px;background:#fff;border:1px solid #ababab;box-sizing:border-box;"></div>
<svg style="left:1881px;top:917px" width="7" height="11" viewBox="0 0 7 11"><path d="M1 0.5 L6 5.5 L1 10.5 Z" fill="#111"/></svg>
<div style="left:0px;top:938px;width:1921px;height:1px;background:#c8c8c8;"></div>
<div style="left:0px;top:939px;width:1921px;height:26px;background:#f3f3f3;"></div>
<div style="left:0px;top:965px;width:1921px;height:1px;background:#6f726f;"></div>
<div style="left:1920px;top:0px;width:1px;height:966px;background:#1a1a1a;"></div>
<div class="t st" style="left:14px;top:943px;width:60px;height:20px;line-height:20px;">Ready</div>
<svg style="left:76px;top:942px" width="18" height="18" viewBox="0 0 18 18"><rect x="2.5" y="3.5" width="13" height="13" fill="#f8f8f8" stroke="#6e6e6e" stroke-width="1"/><rect x="9" y="3" width="7" height="3.6" fill="#6e6e6e"/><circle cx="4.4" cy="5.4" r="3.4" fill="#6e6e6e"/><path d="M5 9.5 h2 M8.5 9.5 h2 M12 9.5 h2 M5 12 h2 M8.5 12 h2 M12 12 h2 M5 14.5 h2 M8.5 14.5 h2 M12 14.5 h2" stroke="#7a7a7a" stroke-width="1"/></svg>
<svg style="left:114px;top:941px" width="24" height="24" viewBox="0 0 24 24"><path d="M9.2 4.6 A7 7 0 0 0 9.2 18.8" fill="none" stroke="#666" stroke-width="1.1" stroke-dasharray="3.2 1.6"/><path d="M10.5 3 V10.2 M8.5 8.2 L10.5 10.4 L12.5 8.2" fill="none" stroke="#555" stroke-width="1.1"/><path d="M12 8.5 H17.5 M15.6 6.5 L17.6 8.5 L15.6 10.5" fill="none" stroke="#555" stroke-width="1.1"/><path d="M11.6 12.7 L20.4 20.3 M20.2 12.9 L11.8 20.3" stroke="#555" stroke-width="1.9"/></svg>
<div class="t st" style="left:138px;top:943px;width:200px;height:20px;line-height:20px;font-weight:bold;color:#333;">Accessibility: Investigate</div>
<svg style="left:1408px;top:941px" width="24" height="24" viewBox="0 0 24 24"><rect x="1" y="2" width="19" height="13" rx="1.2" fill="#4d4d4d"/><rect x="5" y="18.3" width="5" height="1.4" fill="#4d4d4d"/><circle cx="14.6" cy="15.3" r="5.6" fill="#f3f3f3"/><circle cx="14.6" cy="15.3" r="3.6" fill="none" stroke="#4d4d4d" stroke-width="2.6" stroke-dasharray="1.9 0.93"/><circle cx="14.6" cy="15.3" r="2.6" fill="none" stroke="#4d4d4d" stroke-width="1.6"/></svg>
<div class="t st" style="left:1430px;top:943px;width:110px;height:20px;line-height:20px;">Display Settings</div>
<div style="left:1547px;top:939px;width:50px;height:26px;background:#c6c6c6;"></div>
<svg style="left:1563px;top:943px" width="18" height="18" viewBox="0 0 18 18"><rect x="1.5" y="1.5" width="15" height="15" fill="none" stroke="#666"/><path d="M1.5 6.5 H16.5 M1.5 11.5 H16.5 M6.5 1.5 V16.5 M11.5 1.5 V16.5" stroke="#666"/></svg>
<svg style="left:1612px;top:943px" width="20" height="18" viewBox="0 0 20 18"><rect x="1.5" y="1.5" width="16" height="14" fill="none" stroke="#666"/><rect x="5.5" y="3.5" width="8" height="10" fill="none" stroke="#666"/><path d="M7.5 6.5 H11.5 M7.5 8.5 H11.5 M7.5 10.5 H11.5" stroke="#666" stroke-width="0.9"/></svg>
<svg style="left:1662px;top:943px" width="20" height="18" viewBox="0 0 20 18"><rect x="1.5" y="1.5" width="16" height="15" fill="none" stroke="#666"/><path d="M6.5 1.5 V9.5 M11.5 1.5 V9.5 M1.5 9.5 H11.5" stroke="#666" fill="none"/></svg>
<div style="left:1704px;top:951px;width:10px;height:1px;background:#444;"></div>
<div style="left:1720px;top:952px;width:125px;height:1px;background:#555;"></div>
<div style="left:1782px;top:948px;width:1px;height:9px;background:#444;"></div>
<div style="left:1767px;top:945px;width:6px;height:14px;background:#444;"></div>
<div style="left:1851px;top:951px;width:10px;height:1px;background:#444;"></div>
<div style="left:1855px;top:947px;width:1px;height:10px;background:#444;"></div>
<div class="t st" style="left:1869px;top:943px;width:40px;height:20px;line-height:20px;text-align:center;">80%</div>
</body></html>
